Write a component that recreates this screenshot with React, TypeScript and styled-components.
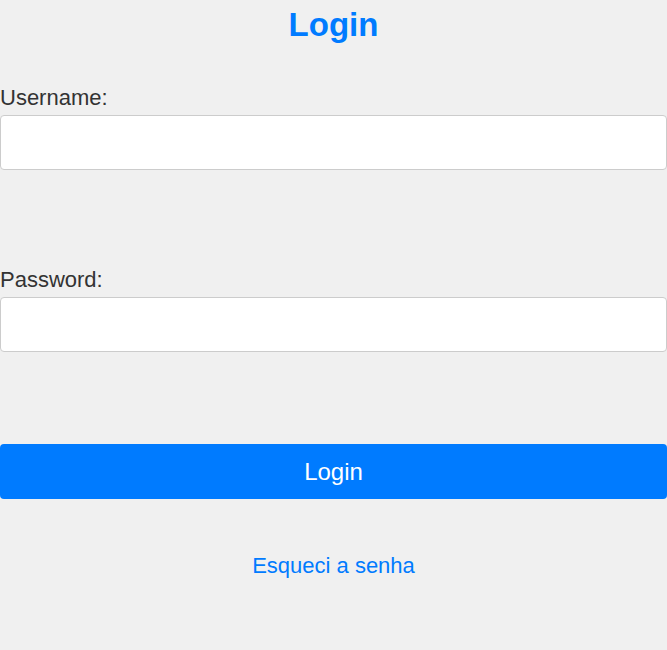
import React from "react";
import styled, { createGlobalStyle } from "styled-components";

const GlobalStyle = createGlobalStyle`
  html, body {
    margin: 0;
    padding: 0;
    background: #f0f0f0;
    font-family: "Liberation Sans", Arial, sans-serif;
  }
  * {
    box-sizing: border-box;
  }
`;

const Page = styled.div`
  display: flex;
  flex-direction: column;
  min-height: 650px;
  background: #f0f0f0;
`;

const Title = styled.h1`
  margin: 0;
  font-size: 33px;
  line-height: 50px;
  font-weight: 700;
  text-align: center;
  color: #007bff;
`;

const Form = styled.form`
  display: flex;
  flex-direction: column;
  margin-top: 35px;
`;

const Field = styled.div<{ $gap?: number }>`
  display: flex;
  flex-direction: column;
  gap: 5px;
  margin-bottom: ${(p) => p.$gap ?? 0}px;
`;

const Label = styled.label`
  font-size: 22px;
  line-height: 25px;
  color: #333;
`;

const Input = styled.input`
  width: 100%;
  height: 55px;
  padding: 0 12px;
  font-size: 20px;
  font-family: inherit;
  background: #fff;
  border: 1px solid #ccc;
  border-radius: 4px;
  outline: none;
`;

const Button = styled.button`
  width: 100%;
  height: 55px;
  border: none;
  border-radius: 4px;
  background: #007bff;
  color: #fff;
  font-family: inherit;
  font-size: 24px;
  cursor: pointer;
`;

const ForgotLink = styled.a`
  align-self: center;
  margin-top: 54px;
  font-size: 22px;
  line-height: 25px;
  color: #007bff;
  text-decoration: none;
`;

const App = () => {
  return (
    <Page>
      <GlobalStyle />
      <Title>Login</Title>
      <Form onSubmit={(e) => e.preventDefault()}>
        <Field $gap={97}>
          <Label htmlFor="username">Username:</Label>
          <Input id="username" type="text" />
        </Field>
        <Field $gap={92}>
          <Label htmlFor="password">Password:</Label>
          <Input id="password" type="password" />
        </Field>
        <Button type="submit">Login</Button>
        <ForgotLink href="#">Esqueci a senha</ForgotLink>
      </Form>
    </Page>
  );
};

export default App;
